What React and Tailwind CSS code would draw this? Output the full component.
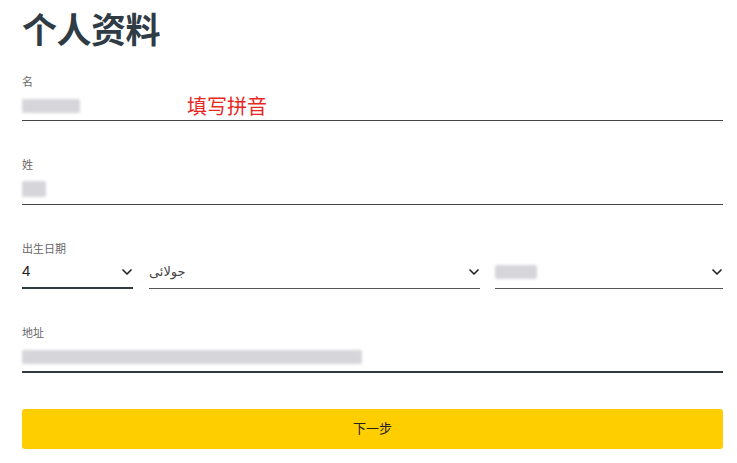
import { ChevronDown } from 'lucide-react'

const font = { fontFamily: '"Liberation Sans", "Noto Sans CJK SC", sans-serif' }

// Blurred placeholder standing in for masked user input
function Masked({ className }) {
  return <div className={`bg-[#d6d6da] blur-[1.5px] rounded-[2px] ${className}`} />
}

function Label({ children }) {
  return <div className="text-[11px] leading-[14px] text-[#666]">{children}</div>
}

function Select({ className, children, focused }) {
  return (
    <div className={`h-[33px] flex items-center justify-between ${focused ? 'border-b-2 border-[#2e3a42]' : 'border-b border-[#555]'} ${className}`}>
      <div className="flex items-center">{children}</div>
      <ChevronDown size={16} strokeWidth={2.5} className="text-[#222] mr-[-2px]" />
    </div>
  )
}

export default function App() {
  return (
    <div className="w-[737px] h-[463px] bg-white pl-[22px] pr-[14px] pt-[10px] overflow-hidden" style={font}>
      <h1 className="text-[35px] leading-[42px] font-bold text-[#2f3b45] tracking-[-0.5px]">个人资料</h1>

      {/* First name */}
      <div className="mt-[23px]">
        <Label>名</Label>
        <div className="h-[32px] border-b border-[#444] flex items-center">
          <Masked className="w-[58px] h-[14px] mt-[2px]" />
          <span className="ml-[107px] text-[20px] leading-[24px] text-[#e8281e] mt-[4px]">填写拼音</span>
        </div>
      </div>

      {/* Last name */}
      <div className="mt-[37px]">
        <Label>姓</Label>
        <div className="h-[33px] border-b border-[#444] flex items-center">
          <Masked className="w-[24px] h-[16px] mt-[2px]" />
        </div>
      </div>

      {/* Birthday */}
      <div className="mt-[37px]">
        <Label>出生日期</Label>
        <div className="flex">
          <Select className="w-[111px]" focused>
            <span className="text-[15px] text-[#222]">4</span>
          </Select>
          <Select className="w-[331px] ml-[16px]">
            <span className="text-[13px] text-[#444]" dir="rtl" style={{ fontFamily: '"DejaVu Sans", sans-serif' }}>جولائی</span>
          </Select>
          <Select className="flex-1 ml-[15px]">
            <Masked className="w-[42px] h-[14px]" />
          </Select>
        </div>
      </div>

      {/* Address */}
      <div className="mt-[37px]">
        <Label>地址</Label>
        <div className="h-[33px] border-b-2 border-[#2e3a42] flex items-center">
          <Masked className="w-[340px] h-[14px] mt-[2px]" />
        </div>
      </div>

      <button className="mt-[36px] w-full h-[40px] rounded-[3px] bg-[#ffce00] text-[13px] text-[#222]">下一步</button>
    </div>
  )
}
